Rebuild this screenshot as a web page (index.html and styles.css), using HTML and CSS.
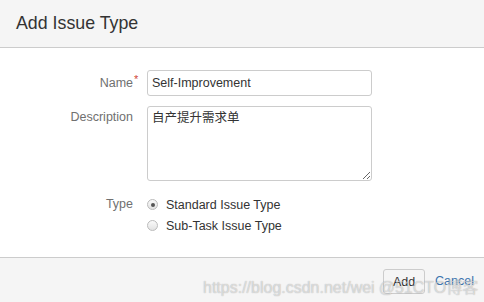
FILE: index.html
```html
<!DOCTYPE html>
<html>
<head>
<meta charset="utf-8">
<link rel="stylesheet" href="styles.css">
</head>
<body>
<div class="dialog">
  <div class="header"><h2 class="title">Add Issue Type</h2></div>
  <form class="body">
    <div class="row row-name">
      <label class="label">Name<span class="req">*</span></label>
      <input class="text" type="text" value="Self-Improvement">
    </div>
    <div class="row row-desc">
      <label class="label label-top">Description</label>
      <textarea class="textarea">自产提升需求单</textarea>
    </div>
    <div class="row row-type">
      <label class="label label-type">Type</label>
      <div class="radios">
        <div class="radio"><span class="dot checked"></span><span>Standard Issue Type</span></div>
        <div class="radio"><span class="dot"></span><span>Sub-Task Issue Type</span></div>
      </div>
    </div>
  </form>
  <div class="footer">
    <button class="btn" type="button">Add</button>
    <a class="cancel" href="#">Cancel</a>
  </div>
  <div class="watermark"><span class="wm1">https://blog.csdn.net/wei</span><span class="wm2">@51CTO博客</span></div>
</div>
</body>
</html>
```
FILE: styles.css
```css
html, body {
  margin: 0;
  padding: 0;
  background: #fff;
}
body {
  font-family: "Liberation Sans", Arial, "Noto Sans CJK SC", sans-serif;
  font-size: 12.5px;
  color: #333;
}
.dialog {
  position: relative;
  width: 484px;
  height: 302px;
  display: flex;
  flex-direction: column;
  overflow: hidden;
}
.header {
  height: 47px;
  background: #f5f5f5;
  border-bottom: 1px solid #ccc;
  display: flex;
  align-items: center;
  padding: 0 16px;
  flex: none;
}
.title {
  margin: 0;
  font-size: 17.8px;
  font-weight: normal;
  color: #333;
}
.body {
  flex: 1;
  margin: 0;
  padding-top: 22px;
  display: flex;
  flex-direction: column;
}
.row {
  display: grid;
  grid-template-columns: 133px 225px;
  column-gap: 14px;
}
.row-desc { margin-top: 10px; }
.row-type { margin-top: 13px; }
.label {
  position: relative;
  text-align: right;
  color: #707070;
  align-self: center;
}
.label-top {
  align-self: start;
  padding-top: 4px;
}
.label-type {
  align-self: start;
  padding-top: 3px;
}
.req {
  position: absolute;
  left: 100%;
  top: -3px;
  margin-left: 1px;
  color: #d04437;
  font-size: 11px;
}
.text {
  box-sizing: border-box;
  height: 26px;
  width: 225px;
  border: 1px solid #ccc;
  border-radius: 3px;
  padding: 0 4px;
  font: inherit;
  color: #333;
  margin: 0;
}
.textarea {
  box-sizing: border-box;
  height: 75px;
  width: 225px;
  border: 1px solid #ccc;
  border-radius: 3px;
  padding: 3px 4px;
  font-family: "Liberation Sans", Arial, "Noto Sans CJK SC", sans-serif;
  font-size: 12.5px;
  line-height: 16px;
  color: #333;
  margin: 0;
  resize: both;
}
.radios {
  display: flex;
  flex-direction: column;
}
.radio {
  display: flex;
  align-items: center;
  gap: 8px;
  height: 21px;
  color: #333;
}
.dot {
  box-sizing: border-box;
  width: 11px;
  height: 11px;
  border-radius: 50%;
  border: 1px solid #bbb;
  background: linear-gradient(#fafafa, #e2e2e2);
  display: flex;
  align-items: center;
  justify-content: center;
  flex: none;
}
.dot.checked::after {
  content: "";
  width: 4px;
  height: 4px;
  border-radius: 50%;
  background: #555;
}
.footer {
  height: 45px;
  flex: none;
  background: #f5f5f5;
  border-top: 1px solid #ccc;
  display: flex;
  justify-content: flex-end;
  align-items: flex-start;
  padding: 11px 10px 0 0;
  box-sizing: border-box;
  gap: 10px;
}
.btn {
  box-sizing: border-box;
  height: 25px;
  width: 42px;
  border: 1px solid #ccc;
  border-radius: 3px;
  background: #f5f5f5;
  color: #333;
  font: inherit;
  padding: 0;
  margin: 0;
}
.cancel {
  color: #3b73af;
  text-decoration: none;
  line-height: 25px;
}
.watermark {
  position: absolute;
  left: 203px;
  top: 274px;
  font-size: 16px;
  white-space: nowrap;
  color: rgba(255, 255, 255, 0.55);
  text-shadow: 0 0 1px rgba(0, 0, 0, 0.35);
  pointer-events: none;
}
.wm2 {
  margin-left: 4px;
}
```
